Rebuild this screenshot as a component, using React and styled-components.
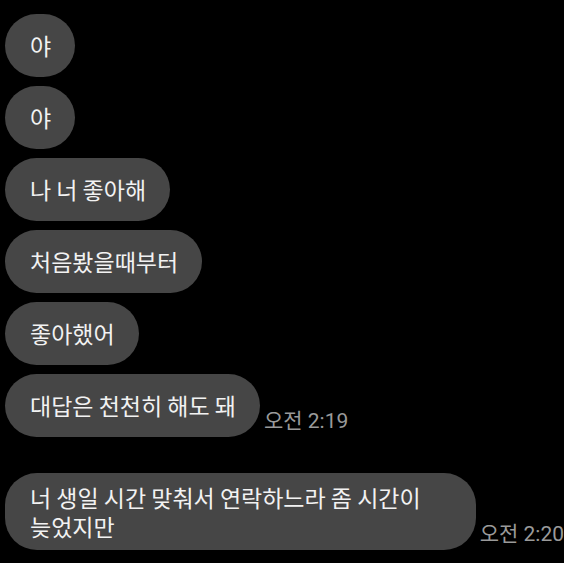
import React from "react";
import styled, { createGlobalStyle } from "styled-components";

const messages = [
  { id: 1, text: "야" },
  { id: 2, text: "야" },
  { id: 3, text: "나 너 좋아해" },
  { id: 4, text: "처음봤을때부터" },
  { id: 5, text: "좋아했어" },
  { id: 6, text: "대답은 천천히 해도 돼", time: "오전 2:19" },
  { id: 7, text: "너 생일 시간 맞춰서 연락하느라 좀 시간이 늦었지만", time: "오전 2:20", newGroup: true },
];

function App() {
  return (
    <>
      <GlobalStyle />
      <Container>
        {messages.map((m) => (
          <Row key={m.id} $newGroup={m.newGroup}>
            <Bubble>{m.text}</Bubble>
            {m.time && <Time>{m.time}</Time>}
          </Row>
        ))}
      </Container>
    </>
  );
}

export default App;

const GlobalStyle = createGlobalStyle`
  html, body {
    margin: 0;
    background: #000;
  }
  body {
    font-family: Roboto, "Noto Sans CJK KR", sans-serif;
  }
`;

const Container = styled.div`
  background: #000;
  min-height: 563px;
  box-sizing: border-box;
  padding: 14px 0 0 5px;
  display: flex;
  flex-direction: column;
  gap: 9px;
`;

const Row = styled.div`
  display: flex;
  align-items: flex-end;
  gap: 4px;
  margin-top: ${(p) => (p.$newGroup ? "27px" : "0")};
`;

const Bubble = styled.div`
  background: #464646;
  color: #f2f2f2;
  font-family: "Noto Sans CJK KR", Roboto, sans-serif;
  font-size: 23px;
  line-height: 29px;
  min-height: 63px;
  box-sizing: border-box;
  padding: 9.5px 24px 9.5px 25px;
  border-radius: 32px;
  display: flex;
  align-items: center;
  min-width: 0;
  word-break: keep-all;
`;

const Time = styled.span`
  flex-shrink: 0;
  color: #9a9a9a;
  font-family: Roboto, "Noto Sans CJK KR", sans-serif;
  font-size: 21px;
  line-height: 24px;
  margin-bottom: 4px;
  white-space: nowrap;
`;
